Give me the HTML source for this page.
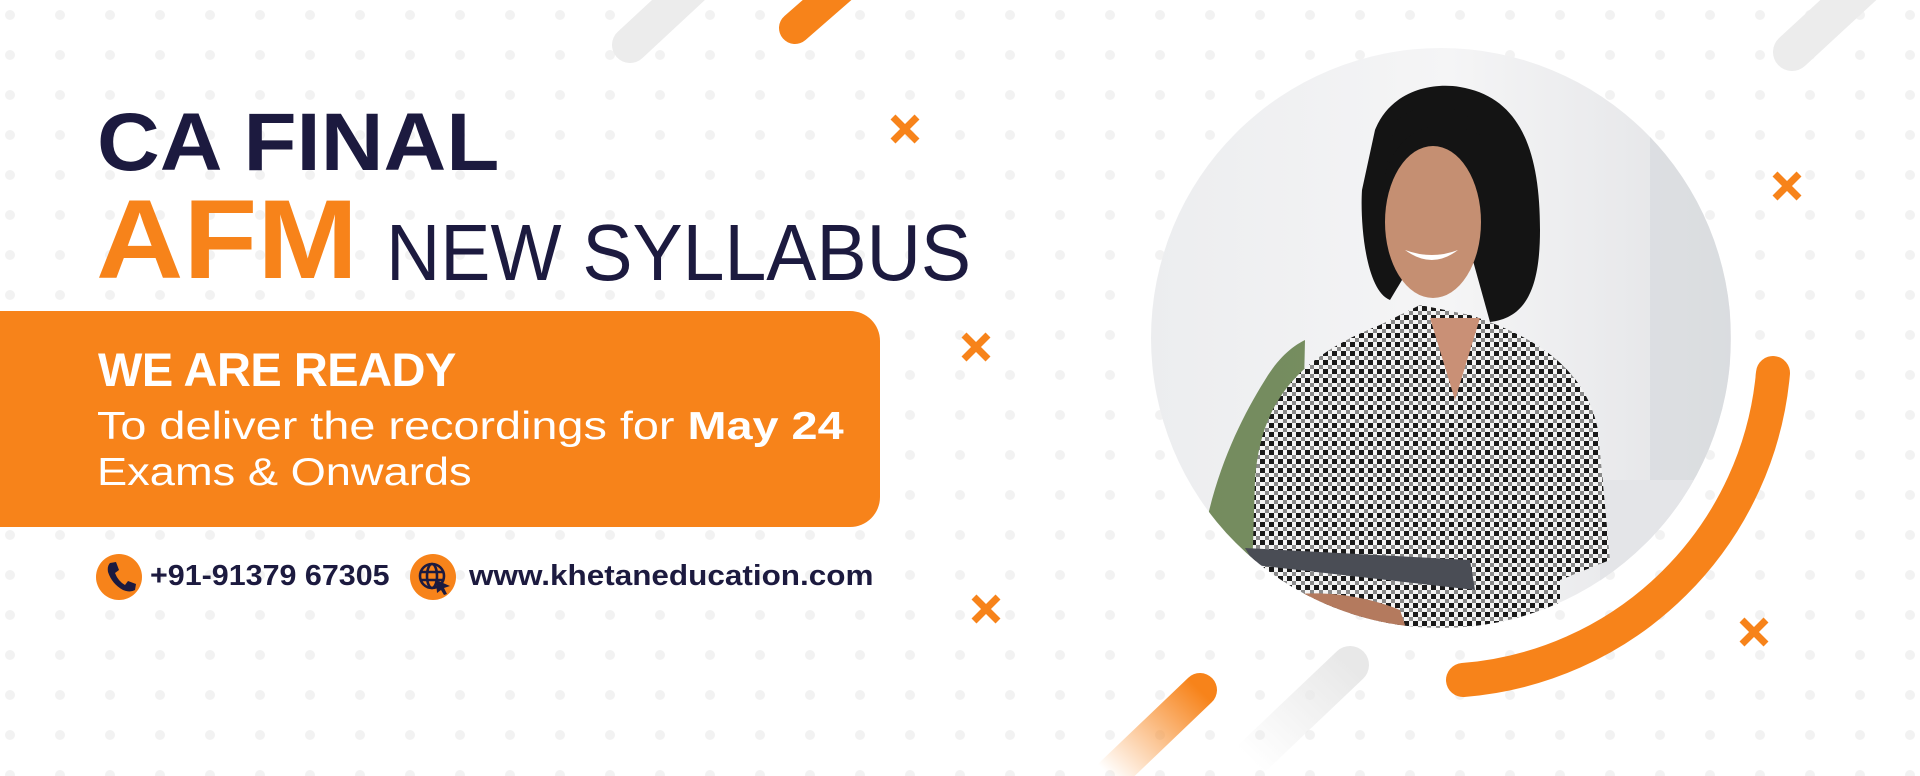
<!DOCTYPE html>
<html><head><meta charset="utf-8"><style>
html,body{margin:0;padding:0;}
body{width:1920px;height:776px;position:relative;overflow:hidden;background:#fff;font-family:"Liberation Sans",sans-serif;}
.t{position:absolute;white-space:nowrap;line-height:1;transform-origin:0 0;}
</style></head><body>
<svg width="1920" height="776" style="position:absolute;left:0;top:0">
<defs>
<pattern id="dots" x="5" y="10" width="50" height="40" patternUnits="userSpaceOnUse"><circle cx="5" cy="5" r="5" fill="#f2f2f2"/></pattern>
<pattern id="chk" width="9" height="9" patternUnits="userSpaceOnUse"><rect width="9" height="9" fill="#f4f4f4"/><rect width="5" height="5" fill="#1a1a1a"/><rect x="5" y="5" width="4" height="4" fill="#8a8a8a"/></pattern>
<clipPath id="cc"><circle cx="1441" cy="338" r="290"/></clipPath>
<linearGradient id="bg" x1="0" x2="1" y1="0" y2="0"><stop offset="0" stop-color="#ecedef"/><stop offset="0.5" stop-color="#f5f5f6"/><stop offset="1" stop-color="#e0e1e4"/></linearGradient>
<linearGradient id="fo" x1="1" y1="0" x2="0" y2="1"><stop offset="0" stop-color="#f7831a"/><stop offset="1" stop-color="#f7831a" stop-opacity="0"/></linearGradient>
<linearGradient id="fg" x1="1" y1="0" x2="0" y2="1"><stop offset="0" stop-color="#e8e8e8"/><stop offset="1" stop-color="#e8e8e8" stop-opacity="0"/></linearGradient>
</defs>
<rect width="1920" height="776" fill="url(#dots)"/>
<line x1="630" y1="45" x2="700" y2="-20" stroke="#ececec" stroke-width="36" stroke-linecap="round"/>
<line x1="795" y1="28" x2="850" y2="-20" stroke="#f7831a" stroke-width="32" stroke-linecap="round"/>
<line x1="1792" y1="52" x2="1870" y2="-20" stroke="#ececec" stroke-width="38" stroke-linecap="round"/>
<line x1="1200" y1="690" x2="1110" y2="776" stroke="url(#fo)" stroke-width="34" stroke-linecap="round"/>
<line x1="1350" y1="665" x2="1250" y2="760" stroke="url(#fg)" stroke-width="38" stroke-linecap="round"/>
<g clip-path="url(#cc)">
<rect x="1150" y="40" width="600" height="600" fill="url(#bg)"/>
<rect x="1650" y="130" width="80" height="500" fill="#d6d8dc" opacity="0.6"/>
<rect x="1600" y="480" width="140" height="150" fill="#e4e5e8"/>
<path d="M1200 560 C1210 480 1240 420 1265 380 C1280 355 1295 345 1305 340 L1300 560 Z" fill="#4c6b2e" opacity="0.75"/>
<path d="M1250 640 L1255 480 C1260 410 1290 360 1380 325 L1420 305 L1470 315 C1530 335 1585 365 1598 430 L1610 560 L1560 580 L1560 640 Z" fill="url(#chk)"/>
<path d="M1430 318 L1455 400 L1480 318 Z" fill="#c99076"/>
<path d="M1375 130 C1390 92 1430 82 1460 87 C1520 97 1540 150 1540 230 C1540 290 1525 318 1490 322 L1470 250 L1420 250 L1390 300 C1365 290 1360 220 1362 190 Z" fill="#141414"/>
<ellipse cx="1433" cy="222" rx="48" ry="76" fill="#c58f72"/>
<path d="M1385 175 C1400 125 1440 115 1480 135 C1470 102 1420 97 1395 122 Z" fill="#141414"/>
<path d="M1405 250 Q1432 270 1458 250 Q1432 260 1405 250Z" fill="#fff"/>
<path d="M1245 548 L1470 560 L1475 590 L1255 565 Z" fill="#4a4d55"/>
<path d="M1260 600 C1300 590 1350 590 1400 610 L1410 640 L1270 640Z" fill="#b47a5e"/>
</g>
<path d="M1773 373 A338 338 0 0 1 1463 680" stroke="#f7831a" stroke-width="34" fill="none" stroke-linecap="round"/>
<g stroke="#f7831a" stroke-width="7">
<path d="M893 117 L917 141 M917 117 L893 141"/>
<path d="M964 335 L988 359 M988 335 L964 359"/>
<path d="M974 597 L998 621 M998 597 L974 621"/>
<path d="M1775 174 L1799 198 M1799 174 L1775 198"/>
<path d="M1742 620 L1766 644 M1766 620 L1742 644"/>
</g>
<path d="M0 311 H850 A30 30 0 0 1 880 341 V497 A30 30 0 0 1 850 527 H0 Z" fill="#f7831a"/>
<circle cx="119" cy="577" r="23" fill="#f7831a"/>
<path d="M110 563 L116 562 L119 570 L115 573 Q118 581 125 585 L128 581 L136 584 L135 590 Q130 593 123 590 Q112 584 108 572 Q107 566 110 563Z" fill="#1c1a3f"/>
<circle cx="433" cy="577" r="23" fill="#f7831a"/>
<g stroke="#1c1a3f" stroke-width="2.6" fill="none">
<circle cx="432" cy="576" r="12"/>
<ellipse cx="432" cy="576" rx="5" ry="12"/>
<line x1="420" y1="572" x2="444" y2="572"/><line x1="420" y1="580" x2="444" y2="580"/>
</g>
<path d="M436 580 L450 586 L444 588 L447 594 L444 595 L441 590 L437 593Z" fill="#1c1a3f"/>
</svg>
<div class="t" style="left:97px;top:102px;font-size:82px;font-weight:bold;color:#1c1a3f;transform:scaleX(1.06)">CA FINAL</div>
<div class="t" style="left:96px;top:184px;font-size:112px;font-weight:bold;color:#f7831a;transform:scaleX(1.08)">AFM</div>
<div class="t" style="left:386px;top:213px;font-size:80px;color:#1c1a3f;transform:scaleX(0.94)">NEW SYLLABUS</div>
<div class="t" style="left:98px;top:346px;font-size:47px;font-weight:bold;color:#fff;letter-spacing:-0.5px">WE ARE READY</div>
<div class="t" style="left:97px;top:407px;font-size:39px;color:#fff;transform:scaleX(1.2)">To deliver the recordings for <b>May 24</b></div>
<div class="t" style="left:97px;top:453px;font-size:39px;color:#fff;transform:scaleX(1.16)">Exams &amp; Onwards</div>
<div class="t" style="left:150px;top:562px;font-size:29px;font-weight:bold;color:#1c1a3f;transform:scaleX(1.05)">+91-91379 67305</div>
<div class="t" style="left:469px;top:562px;font-size:29px;font-weight:bold;color:#1c1a3f;transform:scaleX(1.085)">www.khetaneducation.com</div>
</body></html>
